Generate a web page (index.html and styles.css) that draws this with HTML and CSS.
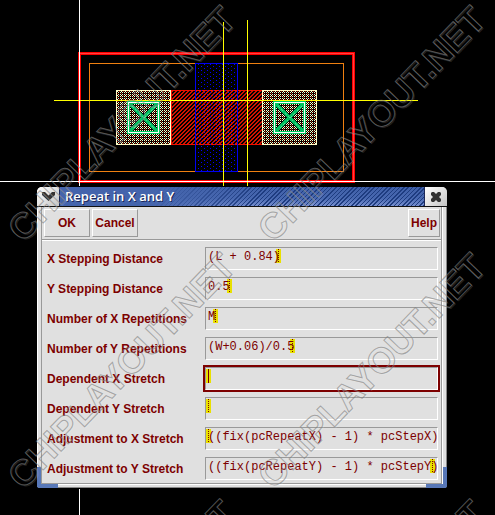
FILE: index.html
```html
<!DOCTYPE html>
<html lang="en">
<head>
<meta charset="utf-8">
<title>Repeat in X and Y</title>
<link rel="stylesheet" href="styles.css">
</head>
<body>
<svg class="layout-canvas" aria-hidden="true" shape-rendering="crispEdges">
  <defs>
    <pattern id="hatch" width="4" height="4" patternUnits="userSpaceOnUse">
      <path d="M2 0h2v1h-2zM1 1h2v1h-2zM0 2h2v1h-2zM0 3h1v1h-1zM3 3h1v1h-1z" fill="#d01400"/>
    </pattern>
    <pattern id="dots" width="6" height="4" patternUnits="userSpaceOnUse">
      <path d="M0 0h1v1h-1zM3 2h1v1h-1z" fill="#0000ff"/>
    </pattern>
    <pattern id="mesh" width="4" height="4" patternUnits="userSpaceOnUse">
      <path d="M0 0h1v1h-1zM2 0h1v1h-1zM1 1h1v1h-1zM0 2h1v1h-1zM2 2h1v1h-1z" fill="#ffffc8"/>
      <path d="M3 1h1v1h-1zM1 3h1v1h-1z" fill="#b81800"/>
    </pattern>
    <g id="contact">
      <rect width="55" height="55" fill="#000"/>
      <rect x=".5" y=".5" width="54" height="54" fill="url(#mesh)" stroke="#ffffc8"/>
      <path d="M14 14L41 41M41 14L14 41" fill="none" stroke="#00c060" stroke-width="3"/>
      <path d="M16 16L40 40M40 16L16 40" fill="none" stroke="#50d890" stroke-width="1" stroke-dasharray="1 1"/>
      <rect x="12.5" y="12.5" width="30" height="30" fill="none" stroke="#00c860" stroke-width="3"/>
      <rect x="12.5" y="12.5" width="30" height="30" fill="none" stroke="#fff"/>
    </g>
  </defs>
  <rect x="79.5" y="53.5" width="274" height="128" fill="none" stroke="#f00" stroke-width="3"/>
  <path d="M80 53.5H353.5V181" fill="none" stroke="#ff4040"/>
  <rect x="89.5" y="63.5" width="254" height="108" fill="none" stroke="#f08010"/>
  <rect x="195" y="63" width="43" height="109" fill="#000"/>
  <rect x="171" y="90.5" width="91" height="54" fill="url(#hatch)" stroke="#f01000"/>
  <rect x="195.500" y="63.500" width="42" height="108" fill="url(#dots)" stroke="#0000f0"/>
  <use href="#contact" x="116" y="90"/>
  <use href="#contact" x="262" y="90"/>
  <path d="M54 100.500H418M223.500 22V186M247.500 20V186" stroke="#ff0" fill="none"/>
  <path d="M79.500 0V186M79.500 489V515" stroke="#fff" fill="none"/>
  <line x1="0" y1="181.500" x2="100%" y2="181.500" stroke="#fff"/>
</svg>

<form class="dialog">
  <header class="titlebar">
    <button class="window-button menu" type="button" aria-label="Window menu">
      <svg width="13" height="9" viewBox="0 0 13 9"><path d="M0 0h3l3.500 3.500L10 0h3v3L6.500 9 0 3z" fill="#333"/></svg>
    </button>
    <h1 class="title">Repeat in X and Y</h1>
    <button class="window-button close" type="button" aria-label="Close">
      <svg width="10" height="10" viewBox="0 0 10 10"><path d="M0 1L1 0h2l2 2 2-2h2l1 1v2L8 5l2 2v2l-1 1H7L5 8l-2 2H1L0 9V7l2-2-2-2z" fill="#333"/></svg>
    </button>
  </header>
  <div class="content">
    <div class="toolbar">
      <button class="action" type="button">OK</button>
      <button class="action" type="button">Cancel</button>
      <button class="action help" type="button">Help</button>
    </div>
    <div class="fields">
      <label for="x-step">X Stepping Distance</label>
      <div class="field"><i class="cursor" style="left:70px"></i><input id="x-step" value="(L + 0.84)"></div>
      <label for="y-step">Y Stepping Distance</label>
      <div class="field"><i class="cursor" style="left:21px"></i><input id="y-step" value="0.5"></div>
      <label for="x-rep">Number of X Repetitions</label>
      <div class="field"><i class="cursor" style="left:7px"></i><input id="x-rep" value="M"></div>
      <label for="y-rep">Number of Y Repetitions</label>
      <div class="field"><i class="cursor" style="left:84px"></i><input id="y-rep" value="(W+0.06)/0.5"></div>
      <label for="x-dep">Dependent X Stretch</label>
      <div class="field active"><i class="cursor" style="left:0px"></i><input id="x-dep" value=""></div>
      <label for="y-dep">Dependent Y Stretch</label>
      <div class="field"><i class="cursor" style="left:0px"></i><input id="y-dep" value=""></div>
      <label for="x-adj">Adjustment to X Stretch</label>
      <div class="field"><i class="cursor" style="left:0px"></i><input id="x-adj" value="((fix(pcRepeatX) - 1) * pcStepX)"></div>
      <label for="y-adj">Adjustment to Y Stretch</label>
      <div class="field"><i class="cursor" style="left:224px"></i><input id="y-adj" value="((fix(pcRepeatY) - 1) * pcStepY)"></div>
    </div>
  </div>
  <span class="grip left"></span>
  <span class="grip right"></span>
</form>

<svg class="watermark" aria-hidden="true">
  <g class="mark-light">
    <text transform="translate(24 226) rotate(-46)" x="-13" y="13">CHIPLAYOUT.NET</text>
    <text transform="translate(274 226) rotate(-46)" x="-13" y="13">CHIPLAYOUT.NET</text>
    <text transform="translate(24 473) rotate(-46)" x="-13" y="13">CHIPLAYOUT.NET</text>
    <text transform="translate(274 473) rotate(-46)" x="-13" y="13">CHIPLAYOUT.NET</text>
  </g>
  <g class="mark-dark">
    <text transform="translate(23 225) rotate(-46)" x="-13" y="13">CHIPLAYOUT.NET</text>
    <text transform="translate(273 225) rotate(-46)" x="-13" y="13">CHIPLAYOUT.NET</text>
    <text transform="translate(23 472) rotate(-46)" x="-13" y="13">CHIPLAYOUT.NET</text>
    <text transform="translate(273 472) rotate(-46)" x="-13" y="13">CHIPLAYOUT.NET</text>
    <text transform="translate(23 719) rotate(-46)" x="-13" y="13">CHIPLAYOUT.NET</text>
    <text transform="translate(273 719) rotate(-46)" x="-13" y="13">CHIPLAYOUT.NET</text>
  </g>
</svg>
</body>
</html>
```
FILE: styles.css
```css
* {
  box-sizing: border-box;
}

html {
  min-height: 100%;
  background: #000;
}

body {
  margin: 0;
  min-height: 100vh;
  padding: 187px 48px 0 37px;
  overflow: hidden;
  position: relative;
  font-family: "Liberation Sans", sans-serif;
}

.layout-canvas,
.watermark {
  position: absolute;
  top: 0;
  left: 0;
  width: 100%;
  height: 100%;
}

.watermark {
  pointer-events: none;
  font: bold 36px "Liberation Sans", sans-serif;
}

.mark-light {
  fill: none;
  stroke: rgba(255, 255, 255, 0.15);
}

.mark-dark {
  fill: none;
  stroke: rgba(128, 128, 128, 0.65);
}

.dialog {
  position: relative;
  margin: 0;
  padding-bottom: 3px;
  background: #e0e0e0;
  border-left: 1px solid #fff;
  border-right: 1px solid #888;
  border-bottom: 1px solid #888;
  border-radius: 5px 5px 3px 3px;
}

.titlebar {
  display: flex;
  height: 20px;
  margin: 0 -1px;
  overflow: hidden;
  border-bottom: 1px solid #111;
  border-radius: 5px 5px 0 0;
}

.window-button {
  display: flex;
  align-items: center;
  justify-content: center;
  flex: none;
  width: 23px;
  padding: 0;
  border: 0;
  background: linear-gradient(135deg, #fff, #dcdcdc 60%, #c4c4c4);
}

.menu {
  border-right: 1px solid #1c2858;
}

.close {
  border-left: 1px solid #1c2858;
}

.title {
  flex: 1;
  margin: 0;
  padding-left: 5px;
  color: #fff;
  font: 600 13px/19px "Open Sans", sans-serif;
  text-shadow: 1px 1px 0 #1c2858;
  background:
    linear-gradient(90deg, #4464ac 25%, transparent 55%),
    repeating-linear-gradient(135deg, #1e3c80 0, #1e3c80 1px, transparent 1px, transparent 3px),
    linear-gradient(#4060a8, #4868b0 60%, #7890d0);
}

.content {
  margin: 0 4px 0 3px;
  padding: 2px 2px 3px;
  border: solid #999;
  border-width: 0 1px 1px;
  box-shadow: 0 1px #fff, 1px 0 #fff;
}

.toolbar {
  display: flex;
  gap: 2px;
  height: 31px;
  margin: 0 -2px;
  padding: 0 1px 1px 2px;
  border-bottom: 1px solid #999;
  box-shadow: 0 1px #fff;
}

.action {
  height: 28px;
  min-width: 46px;
  padding: 0 2px;
  border: 1px solid;
  border-color: #fff #999 #999 #fff;
  background: #e0e0e0;
  color: #7d0000;
  font: bold 12px "Liberation Sans", sans-serif;
}

.help {
  min-width: 32px;
  margin-left: auto;
}

.fields {
  display: grid;
  grid-template-columns: 158px 1fr;
  grid-auto-rows: 23px;
  row-gap: 7px;
  margin: 7px 1px 0 3px;
}

.fields label {
  color: #7d0000;
  font: bold 12px/25px "Liberation Sans", sans-serif;
  white-space: nowrap;
}

.field {
  position: relative;
  border: 1px solid;
  border-color: #999 #fff #fff #999;
}

.active {
  outline: 2px solid #7d0000;
}

.field input {
  position: relative;
  display: block;
  width: 100%;
  height: 18px;
  padding: 0 0 0 2px;
  border: 0;
  outline: 0;
  background: transparent;
  color: #7d0000;
  font: 12px/18px "Liberation Mono", monospace;
}

.cursor {
  position: absolute;
  top: 1px;
  width: 5px;
  height: 14px;
  background: linear-gradient(90deg, #e8e000 2px, transparent 2px 3px, #e8e000 3px),
    repeating-linear-gradient(#7d0000 0 1px, #e8e000 1px 2px);
}

.active .cursor {
  background: linear-gradient(90deg, #e8e000 2px, #7d0000 2px 3px, #e8e000 3px);
}

.grip {
  position: absolute;
  bottom: -1px;
  width: 21px;
  height: 21px;
  border: 0 solid #5878b8;
  border-bottom-width: 4px;
}

.grip.left {
  left: -1px;
  border-left-width: 4px;
  border-bottom-left-radius: 3px;
}

.grip.right {
  right: -1px;
  border-right-width: 4px;
  border-bottom-right-radius: 3px;
}
```
